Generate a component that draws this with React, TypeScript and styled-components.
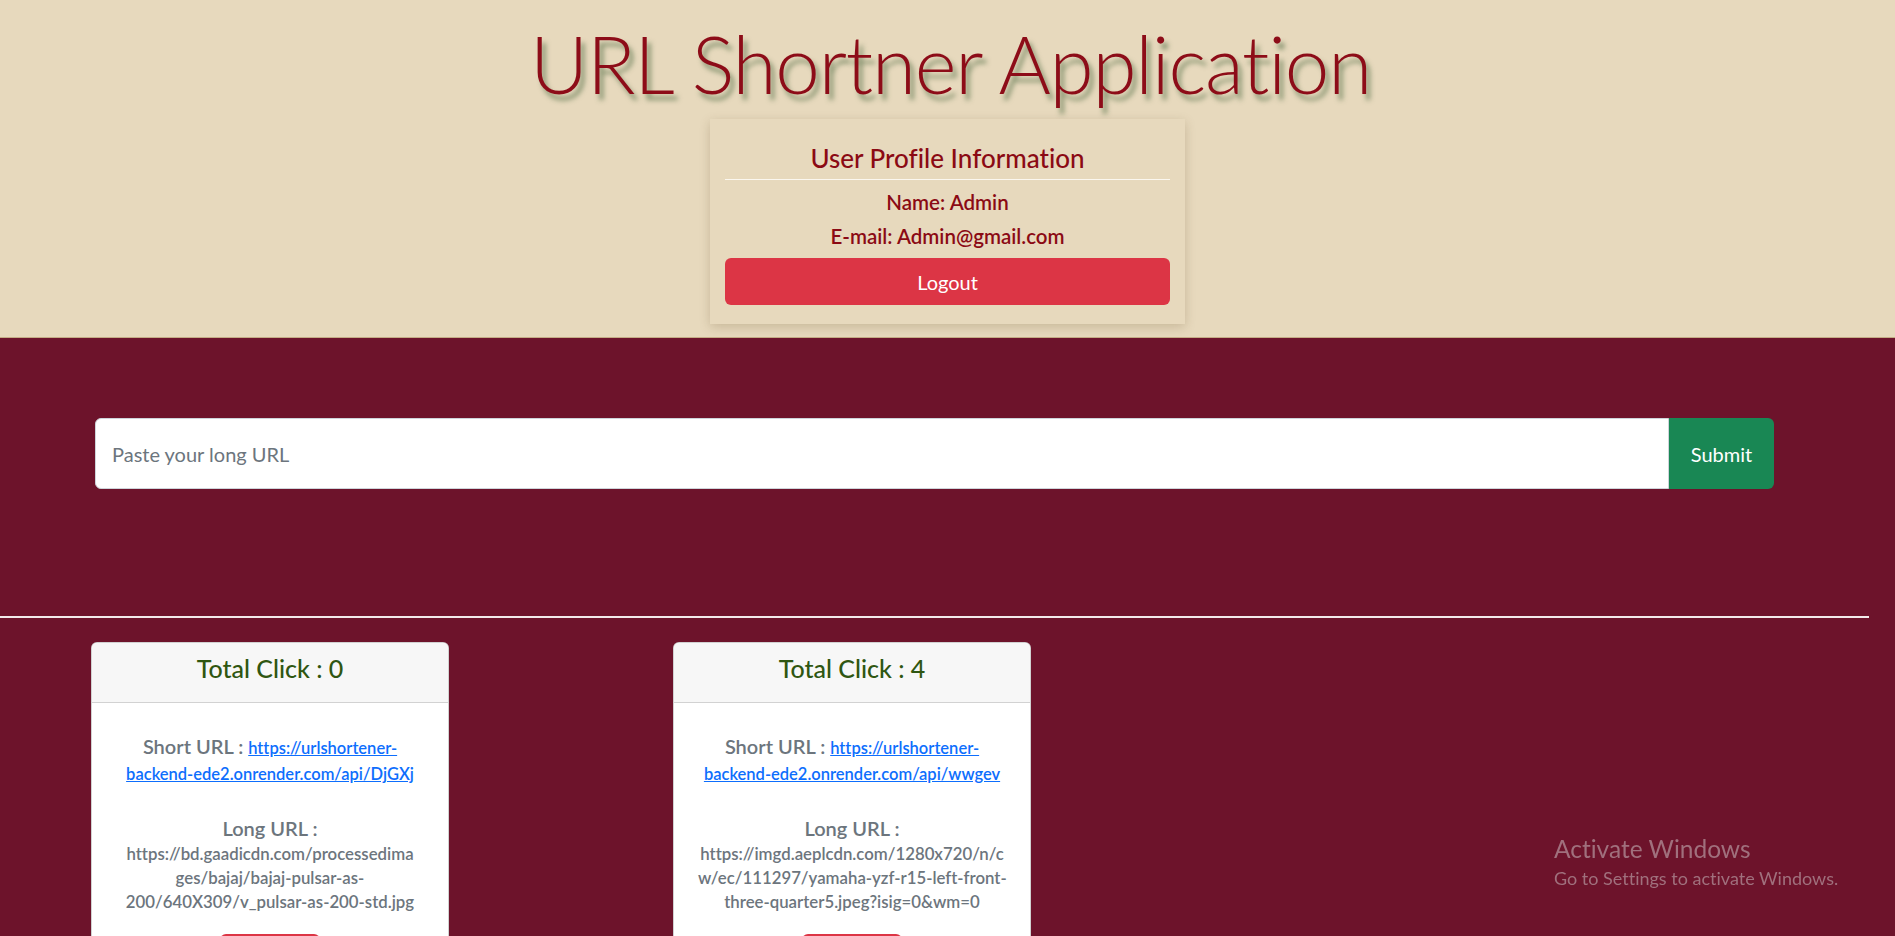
import React from "react";
import styled, { createGlobalStyle } from "styled-components";

const GlobalStyle = createGlobalStyle`
  html, body {
    margin: 0;
    padding: 0;
    background: #6d132b;
    font-family: Lato, "Open Sans", "Noto Sans", sans-serif;
    font-variant-ligatures: none;
    scrollbar-width: none;
  }
  html::-webkit-scrollbar, body::-webkit-scrollbar { display: none; }
  * { box-sizing: border-box; }
`;

const Header = styled.header`
  height: 338px;
  background: #e7d9bd;
  border-bottom: 1px solid #c4ad86;
  padding-top: 15px;
  display: flex;
  flex-direction: column;
  align-items: center;
`;

const Title = styled.h1`
  margin: 0;
  font-family: Lato, "Open Sans", sans-serif;
  font-weight: 300;
  font-size: 80px;
  line-height: 96px;
  letter-spacing: -1.2px;
  font-variant-ligatures: none;
  font-feature-settings: "liga" 0, "dlig" 0;
  color: #8d0c18;
  text-shadow: 4px 6px 5px rgba(70, 100, 60, 0.6);
  padding-left: 6px;
`;

const ProfileCard = styled.section`
  margin-top: 8px;
  width: 475px;
  padding: 15px 15px 19px;
  background: #e7d9bd;
  box-shadow: 0 3px 10px rgba(90, 70, 30, 0.22);
  display: flex;
  flex-direction: column;
  align-items: stretch;
  text-align: center;
  color: #8b0a14;
`;

const ProfileTitle = styled.h4`
  margin: 9px 0 0;
  font-size: 26px;
  font-weight: 500;
  line-height: 1.2;
`;

const Divider = styled.div`
  margin-top: 5px;
  height: 1px;
  background: #fbf7ef;
`;

const InfoLine = styled.div`
  margin-top: 10px;
  font-size: 20.5px;
  font-weight: 600;
  line-height: 24px;
`;

const RedButton = styled.button<{ $width?: string; $height: number }>`
  display: block;
  width: ${(p) => p.$width ?? "100%"};
  height: ${(p) => p.$height}px;
  border: none;
  border-radius: 6px;
  background: #dc3545;
  color: #fff;
  font-family: Lato, "Open Sans", sans-serif;
  font-size: 20px;
  cursor: pointer;
`;

const LogoutButton = styled(RedButton)`
  margin-top: 10px;
`;

const Main = styled.main`
  padding-top: 80px;
`;

const FormRow = styled.form`
  display: flex;
  padding: 0 121px 0 95px;
`;

const UrlInput = styled.input`
  flex: 1;
  height: 71px;
  border: 1px solid #ced4da;
  border-radius: 6px 0 0 6px;
  padding: 0 16px;
  font-family: Lato, "Open Sans", sans-serif;
  font-size: 20px;
  color: #212529;
  background: #fff;
  outline: none;
  &::placeholder { color: #6c757d; }
`;

const SubmitButton = styled.button`
  width: 105px;
  height: 71px;
  border: none;
  border-radius: 0 6px 6px 0;
  background: #198754;
  color: #fff;
  font-family: Lato, "Open Sans", sans-serif;
  font-size: 20px;
`;

const Rule = styled.hr`
  margin: 127px 0 0;
  width: 1869px;
  height: 2px;
  border: none;
  background: #f3eaea;
`;

const CardGrid = styled.div`
  display: grid;
  grid-template-columns: repeat(3, 358px);
  column-gap: 224px;
  padding: 24px 0 40px 91px;
  align-items: start;
`;

const Card = styled.article`
  background: #fff;
  border: 1px solid rgba(0, 0, 0, 0.18);
  border-radius: 6px;
  overflow: hidden;
`;

const CardHeader = styled.div`
  background: #f7f7f7;
  border-bottom: 1px solid #d2d2d2;
  padding: 10px 16px 19px;
  text-align: center;
`;

const ClickCount = styled.h3`
  margin: 0;
  font-size: 25px;
  font-weight: 500;
  line-height: 30px;
  color: #2f5611;
`;

const CardBody = styled.div`
  padding: 31px 24px 16px;
  text-align: center;
  color: #6c757d;
`;

const Label = styled.span`
  font-size: 20px;
  font-weight: 600;
`;

const Para = styled.p<{ $gap?: number }>`
  margin: ${(p) => p.$gap ?? 0}px 0 0;
  font-size: 20px;
  line-height: 24px;
`;

const ShortLink = styled.a`
  font-size: 16.5px;
  font-weight: 600;
  color: #0d6efd;
  text-decoration: underline;
`;

const LongText = styled.div`
  margin-top: 2px;
  font-size: 16.8px;
  font-weight: 600;
  line-height: 24px;
`;

const LongLine = styled.span`
  display: block;
  white-space: nowrap;
`;

const DeleteButton = styled(RedButton)`
  margin: 20px auto 0;
  font-size: 18px;
`;

const Watermark = styled.div`
  position: fixed;
  left: 1554px;
  top: 834px;
  color: #a0707d;
  font-family: Lato, "Open Sans", sans-serif;
  pointer-events: none;
`;

const WatermarkTitle = styled.div`
  font-size: 24.5px;
  line-height: 1.2;
`;

const WatermarkSub = styled.div`
  margin-top: 5px;
  font-size: 18px;
  line-height: 1.2;
`;

type UrlItem = { clicks: number; shortUrl: string; longLines: string[] };

const items: UrlItem[] = [
  {
    clicks: 0,
    shortUrl: "https://urlshortener-backend-ede2.onrender.com/api/DjGXj",
    longLines: [
      "https://bd.gaadicdn.com/processedima",
      "ges/bajaj/bajaj-pulsar-as-",
      "200/640X309/v_pulsar-as-200-std.jpg",
    ],
  },
  {
    clicks: 4,
    shortUrl: "https://urlshortener-backend-ede2.onrender.com/api/wwgev",
    longLines: [
      "https://imgd.aeplcdn.com/1280x720/n/c",
      "w/ec/111297/yamaha-yzf-r15-left-front-",
      "three-quarter5.jpeg?isig=0&wm=0",
    ],
  },
];

export default function App() {
  return (
    <>
      <GlobalStyle />
      <Header>
        <Title>URL Shortner Application</Title>
        <ProfileCard>
          <ProfileTitle>User Profile Information</ProfileTitle>
          <Divider />
          <InfoLine>Name: Admin</InfoLine>
          <InfoLine>E-mail: Admin@gmail.com</InfoLine>
          <LogoutButton $height={47}>Logout</LogoutButton>
        </ProfileCard>
      </Header>
      <Main>
        <FormRow onSubmit={(e) => e.preventDefault()}>
          <UrlInput placeholder="Paste your long URL" />
          <SubmitButton type="submit">Submit</SubmitButton>
        </FormRow>
        <Rule />
        <CardGrid>
          {items.map((it) => (
            <Card key={it.shortUrl}>
              <CardHeader>
                <ClickCount>Total Click : {it.clicks}</ClickCount>
              </CardHeader>
              <CardBody>
                <Para>
                  <Label>Short URL : </Label>
                  <ShortLink href={it.shortUrl}>{it.shortUrl}</ShortLink>
                </Para>
                <Para $gap={30}>
                  <Label>Long URL :</Label>
                </Para>
                <LongText>
                  {it.longLines.map((l) => (
                    <LongLine key={l}>{l}</LongLine>
                  ))}
                </LongText>
                <DeleteButton $width="100px" $height={38}>
                  Delete
                </DeleteButton>
              </CardBody>
            </Card>
          ))}
        </CardGrid>
      </Main>
      <Watermark>
        <WatermarkTitle>Activate Windows</WatermarkTitle>
        <WatermarkSub>Go to Settings to activate Windows.</WatermarkSub>
      </Watermark>
    </>
  );
}
